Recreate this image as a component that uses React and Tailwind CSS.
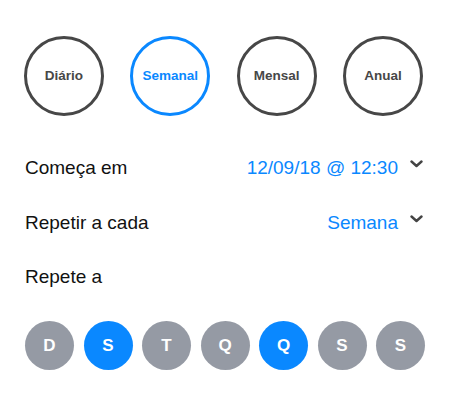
import React from 'react';

const periods = ['Diário', 'Semanal', 'Mensal', 'Anual'];
const days = [
  { l: 'D', on: false },
  { l: 'S', on: true },
  { l: 'T', on: false },
  { l: 'Q', on: false },
  { l: 'Q', on: true },
  { l: 'S', on: false },
  { l: 'S', on: false },
];

function Chevron() {
  return (
    <svg width="13" height="8" viewBox="0 0 13 8" className="ml-[12px] mb-[8px]">
      <path d="M1.5 1.5 L6.5 6 L11.5 1.5" fill="none" stroke="#444" strokeWidth="2.4" strokeLinecap="round" strokeLinejoin="round" />
    </svg>
  );
}

export default function App() {
  return (
    <div className="w-[450px] h-[415px] bg-white font-['Liberation_Sans',Arial,sans-serif]">
      {/* Period selector */}
      <div className="flex justify-between pl-6 pr-[27px] pt-9">
        {periods.map((p) => {
          const active = p === 'Semanal';
          return (
            <div
              key={p}
              className={`w-20 h-20 rounded-full border-[3px] flex items-center justify-center text-[13.5px] font-bold ${
                active ? 'border-[#0a88ff] text-[#0a88ff]' : 'border-[#474747] text-[#474747]'
              }`}
            >
              {p}
            </div>
          );
        })}
      </div>

      {/* Rows */}
      <div className="pl-[25px] pr-[27px] mt-[37px] text-[19px] text-[#111]">
        <div className="flex items-center justify-between h-[30px]">
          <span>Começa em</span>
          <span className="flex items-center text-[#0a88ff]">
            12/09/18 @ 12:30
            <Chevron />
          </span>
        </div>
        <div className="flex items-center justify-between h-[30px] mt-[25px]">
          <span>Repetir a cada</span>
          <span className="flex items-center text-[#0a88ff]">
            Semana
            <Chevron />
          </span>
        </div>
        <div className="flex items-center h-[30px] mt-[24px]">
          <span>Repete a</span>
        </div>
      </div>

      {/* Days */}
      <div className="flex justify-between pl-[25px] pr-[25px] mt-[29px]">
        {days.map((d, i) => (
          <div
            key={i}
            className={`w-[49px] h-[49px] rounded-full flex items-center justify-center text-white text-[17px] font-bold ${
              d.on ? 'bg-[#0a88ff]' : 'bg-[#959aa4]'
            }`}
          >
            {d.l}
          </div>
        ))}
      </div>
    </div>
  );
}
